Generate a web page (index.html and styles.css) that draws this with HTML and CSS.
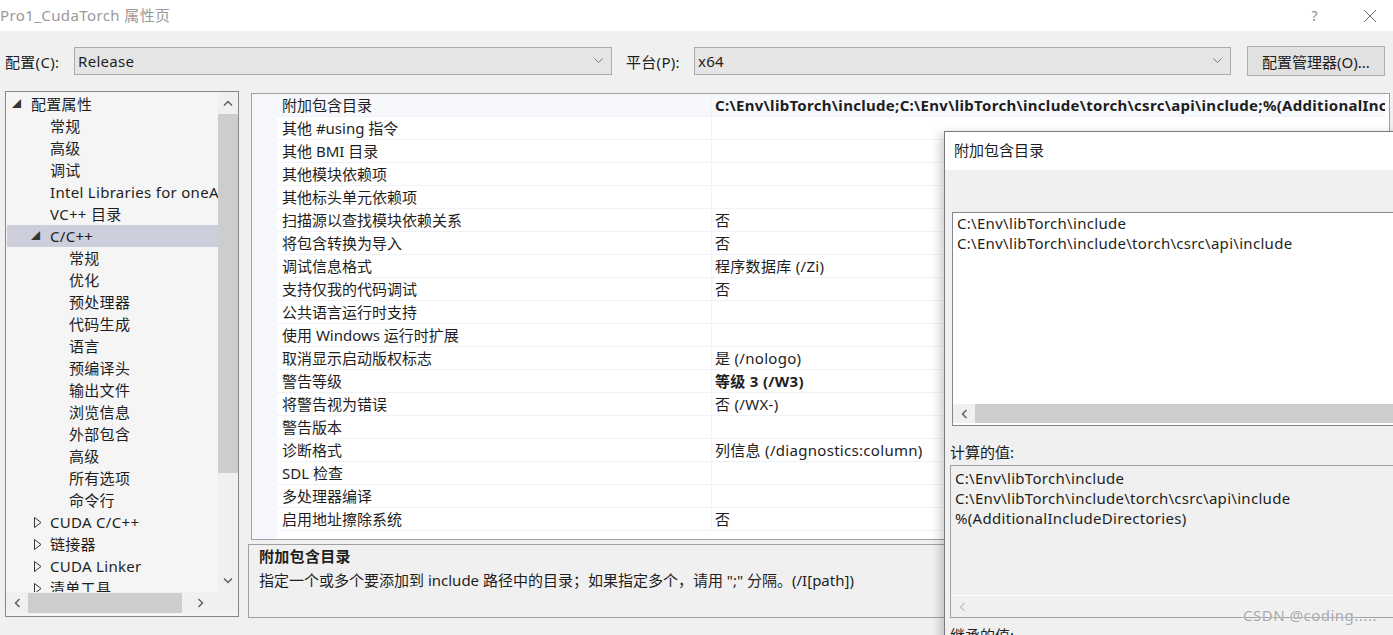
FILE: index.html
```html
<!DOCTYPE html>
<html lang="zh-CN">
<head>
<meta charset="utf-8">
<title>Pro1_CudaTorch 属性页</title>
<link rel="stylesheet" href="styles.css">
</head>
<body>
<div class="window">
  <div class="titlebar">
    <span class="title">Pro1_CudaTorch 属性页</span>
    <span class="help">?</span>
    <svg class="close" width="14" height="14" viewBox="0 0 14 14"><path d="M1 1L13 13M13 1L1 13" stroke="#6b6b6b" stroke-width="1" fill="none"/></svg>
  </div>

  <div class="configbar">
    <span class="lbl lbl-conf">配置(C):</span>
    <div class="select sel-conf"><span>Release</span><svg class="chev" width="9" height="6" viewBox="0 0 9 6"><path d="M0.5 0.5L4.5 4.5L8.5 0.5" stroke="#7a7a7a" fill="none"/></svg></div>
    <span class="lbl lbl-plat">平台(P):</span>
    <div class="select sel-plat"><span>x64</span><svg class="chev" width="9" height="6" viewBox="0 0 9 6"><path d="M0.5 0.5L4.5 4.5L8.5 0.5" stroke="#7a7a7a" fill="none"/></svg></div>
    <div class="button">配置管理器(O)...</div>
  </div>

  <div class="main">
    <div class="tree">
      <div class="tree-body">
        <div class="tree-items">
          <div class="ti l0"><span class="exp">◢</span>配置属性</div>
          <div class="ti l1">常规</div>
          <div class="ti l1">高级</div>
          <div class="ti l1">调试</div>
          <div class="ti l1">Intel Libraries for oneAPI</div>
          <div class="ti l1">VC++ 目录</div>
          <div class="ti l1 sel"><span class="exp">◢</span>C/C++</div>
          <div class="ti l2">常规</div>
          <div class="ti l2">优化</div>
          <div class="ti l2">预处理器</div>
          <div class="ti l2">代码生成</div>
          <div class="ti l2">语言</div>
          <div class="ti l2">预编译头</div>
          <div class="ti l2">输出文件</div>
          <div class="ti l2">浏览信息</div>
          <div class="ti l2">外部包含</div>
          <div class="ti l2">高级</div>
          <div class="ti l2">所有选项</div>
          <div class="ti l2">命令行</div>
          <div class="ti l1"><span class="col"><svg width="8" height="11" viewBox="0 0 8 11"><path d="M0.5 0.5L7 5.5L0.5 10.5Z" stroke="#333" fill="none"/></svg></span>CUDA C/C++</div>
          <div class="ti l1"><span class="col"><svg width="8" height="11" viewBox="0 0 8 11"><path d="M0.5 0.5L7 5.5L0.5 10.5Z" stroke="#333" fill="none"/></svg></span>链接器</div>
          <div class="ti l1"><span class="col"><svg width="8" height="11" viewBox="0 0 8 11"><path d="M0.5 0.5L7 5.5L0.5 10.5Z" stroke="#333" fill="none"/></svg></span>CUDA Linker</div>
          <div class="ti l1"><span class="col"><svg width="8" height="11" viewBox="0 0 8 11"><path d="M0.5 0.5L7 5.5L0.5 10.5Z" stroke="#333" fill="none"/></svg></span>清单工具</div>
        </div>
        <div class="vscroll">
          <svg class="arr" width="10" height="6" viewBox="0 0 10 6"><path d="M1 5.5L5 1.5L9 5.5" stroke="#606060" stroke-width="1.5" fill="none"/></svg>
          <div class="vthumb"></div>
          <div class="vspace"></div>
          <svg class="arr" width="10" height="6" viewBox="0 0 10 6"><path d="M1 0.5L5 4.5L9 0.5" stroke="#606060" stroke-width="1.5" fill="none"/></svg>
        </div>
      </div>
      <div class="hscroll">
        <svg class="harr" width="6" height="10" viewBox="0 0 6 10"><path d="M5.5 1L1.5 5L5.5 9" stroke="#606060" stroke-width="1.5" fill="none"/></svg>
        <div class="hthumb"></div>
        <div class="hspace"></div>
        <svg class="harr" width="6" height="10" viewBox="0 0 6 10"><path d="M0.5 1L4.5 5L0.5 9" stroke="#606060" stroke-width="1.5" fill="none"/></svg>
        <div class="corner"></div>
      </div>
    </div>

    <div class="rightcol">
      <div class="grid">
        <div class="row first"><div class="name">附加包含目录</div><div class="val bold">C:\Env\libTorch\include;C:\Env\libTorch\include\torch\csrc\api\include;%(AdditionalIncludeDirectories)</div></div>
        <div class="row"><div class="name">其他 #using 指令</div><div class="val"></div></div>
        <div class="row"><div class="name">其他 BMI 目录</div><div class="val"></div></div>
        <div class="row"><div class="name">其他模块依赖项</div><div class="val"></div></div>
        <div class="row"><div class="name">其他标头单元依赖项</div><div class="val"></div></div>
        <div class="row"><div class="name">扫描源以查找模块依赖关系</div><div class="val">否</div></div>
        <div class="row"><div class="name">将包含转换为导入</div><div class="val">否</div></div>
        <div class="row"><div class="name">调试信息格式</div><div class="val">程序数据库 (/Zi)</div></div>
        <div class="row"><div class="name">支持仅我的代码调试</div><div class="val">否</div></div>
        <div class="row"><div class="name">公共语言运行时支持</div><div class="val"></div></div>
        <div class="row"><div class="name">使用 Windows 运行时扩展</div><div class="val"></div></div>
        <div class="row"><div class="name">取消显示启动版权标志</div><div class="val">是 (/nologo)</div></div>
        <div class="row"><div class="name">警告等级</div><div class="val bold">等级 3 (/W3)</div></div>
        <div class="row"><div class="name">将警告视为错误</div><div class="val">否 (/WX-)</div></div>
        <div class="row"><div class="name">警告版本</div><div class="val"></div></div>
        <div class="row"><div class="name">诊断格式</div><div class="val">列信息 (/diagnostics:column)</div></div>
        <div class="row"><div class="name">SDL 检查</div><div class="val"></div></div>
        <div class="row"><div class="name">多处理器编译</div><div class="val"></div></div>
        <div class="row"><div class="name">启用地址擦除系统</div><div class="val">否</div></div>
      </div>
      <div class="desc">
        <div class="desc-title">附加包含目录</div>
        <div class="desc-text">指定一个或多个要添加到 include 路径中的目录；如果指定多个，请用 ";" 分隔。(/I[path])</div>
      </div>
    </div>
  </div>

  <div class="popup">
    <div class="pop-title">附加包含目录</div>
    <div class="pop-body">
      <div class="toolbar-space"></div>
      <div class="editbox">
        <div class="lines">
          <div>C:\Env\libTorch\include</div>
          <div>C:\Env\libTorch\include\torch\csrc\api\include</div>
        </div>
        <div class="pop-hscroll">
          <svg class="harr" width="6" height="10" viewBox="0 0 6 10"><path d="M5.5 1L1.5 5L5.5 9" stroke="#606060" stroke-width="1.5" fill="none"/></svg>
          <div class="pthumb"></div>
        </div>
      </div>
      <div class="pop-label">计算的值:</div>
      <div class="computed">
        <div class="lines">
          <div>C:\Env\libTorch\include</div>
          <div>C:\Env\libTorch\include\torch\csrc\api\include</div>
          <div>%(AdditionalIncludeDirectories)</div>
        </div>
        <div class="comp-hscroll">
          <svg class="harr" width="6" height="10" viewBox="0 0 6 10"><path d="M5.5 1L1.5 5L5.5 9" stroke="#c8c8c8" stroke-width="1.5" fill="none"/></svg>
        </div>
      </div>
      <div class="pop-label inh">继承的值:</div>
    </div>
  </div>

  <div class="watermark">CSDN @coding.....</div>
</div>
</body>
</html>
```

FILE: styles.css
```css
* { box-sizing: border-box; }

html, body {
  margin: 0;
  padding: 0;
}

body {
  width: 1393px;
  height: 635px;
  overflow: hidden;
  background: #f0f0f0;
  font-family: "Noto Sans", "Noto Sans CJK SC", sans-serif;
  font-size: 15px;
  letter-spacing: 0.3px;
  color: #1e1e1e;
}

.window {
  position: relative;
  width: 1393px;
  height: 635px;
}

/* title bar */
.titlebar {
  height: 31px;
  background: #ffffff;
  display: flex;
  align-items: center;
}
.title {
  color: #9a9a9a;
  font-size: 15px;
  letter-spacing: 0.4px;
  flex: 1;
  margin-top: -2px;
}
.help {
  color: #8a8a8a;
  font-size: 14px;
  margin-right: 45px;
}
.close {
  margin-right: 16px;
}

/* config bar */
.configbar {
  height: 60px;
  display: flex;
  align-items: center;
  padding-left: 5px;
}
.lbl { color: #1e1e1e; }
.lbl-conf { width: 69px; }
.lbl-plat { width: 68px; margin-left: 14px; }
.select {
  height: 28px;
  background: #e5e5e5;
  border: 1px solid #acacac;
  display: flex;
  align-items: center;
  justify-content: space-between;
  padding: 0 8px 0 3px;
}
.sel-conf { width: 538px; }
.sel-plat { width: 537px; }
.button {
  margin-left: 16px;
  width: 138px;
  height: 30px;
  background: #e1e1e1;
  border: 1px solid #adadad;
  display: flex;
  align-items: center;
  justify-content: center;
  letter-spacing: 0;
}

/* main */
.main {
  display: flex;
  align-items: flex-start;
}

.tree {
  margin-left: 5px;
  width: 234px;
  height: 526px;
  border: 1px solid #828790;
  background: #f5f5f5;
  display: flex;
  flex-direction: column;
}
.tree-body {
  flex: 1;
  display: flex;
  min-height: 0;
}
.tree-items {
  flex: 1;
  overflow: hidden;
  padding-top: 1px;
  padding-left: 1px;
}
.ti {
  height: 22px;
  line-height: 22px;
  white-space: nowrap;
  overflow: hidden;
}
.ti.l0 { padding-left: 24px; }
.ti.l1 { padding-left: 43px; }
.ti.l2 { padding-left: 62px; }
.ti.sel { background: #cccedb; }
.exp {
  display: inline-block;
  width: 0;
  margin-left: -19px;
  margin-right: 19px;
  font-size: 9px;
  color: #333;
  vertical-align: top;
}
.col {
  display: inline-block;
  width: 0;
  margin-left: -16px;
  margin-right: 16px;
  vertical-align: top;
}
.col svg { margin-top: 6px; }

.vscroll {
  width: 20px;
  background: #f0f0f0;
  display: flex;
  flex-direction: column;
  align-items: center;
}
.vscroll .arr { margin: 8px 0; }
.vthumb {
  width: 20px;
  height: 359px;
  background: #cdcdcd;
}
.vspace { flex: 1; }

.hscroll {
  height: 21px;
  margin-bottom: 3px;
  display: flex;
  align-items: center;
  background: #f0f0f0;
}
.hscroll .harr { margin: 0 8px; }
.hthumb {
  width: 154px;
  height: 20px;
  background: #cdcdcd;
}
.hspace { flex: 1; }
.corner {
  width: 20px;
  height: 21px;
  background: #f0f0f0;
  margin-left: 6px;
}

.rightcol {
  margin-left: 9px;
  width: 1142px;
  display: flex;
  flex-direction: column;
  margin-top: 2px;
}

.grid {
  margin-left: 3px;
  height: 447px;
  border: 1px solid #a0a0a0;
  background: #ffffff;
  padding-left: 25px;
  padding-right: 4px;
  box-shadow: inset 25px 0 0 #f5f7fc;
}
.row {
  height: 23px;
  display: flex;
  border-bottom: 1px solid #f0f2f8;
  background: #ffffff;
}
.row.first { background: #f6f8fc; }
.name {
  width: 434px;
  padding-left: 5px;
  line-height: 22px;
  white-space: nowrap;
  letter-spacing: 0;
}
.val {
  flex: 1;
  border-left: 1px solid #f0f2f8;
  padding-left: 3px;
  line-height: 22px;
  white-space: nowrap;
  overflow: hidden;
}
.bold { font-weight: bold; }

.desc {
  margin-top: 4px;
  height: 74px;
  border: 1px solid #a0a0a0;
  background: #f0f0f0;
  padding: 0 10px;
}
.desc-title {
  font-weight: bold;
  line-height: 23px;
}
.desc-text {
  line-height: 24px;
  letter-spacing: 0;
}

/* popup dialog */
.popup {
  position: absolute;
  left: 944px;
  top: 131px;
  width: 470px;
  height: 520px;
  border: 1px solid #7a7a7a;
  background: #f0f0f0;
  box-shadow: -3px 3px 10px rgba(0, 0, 0, 0.22);
}
.pop-title {
  height: 38px;
  background: #ffffff;
  padding-left: 9px;
  line-height: 37px;
  font-size: 15px;
  letter-spacing: 0;
}
.pop-body {
  padding-left: 7px;
}
.toolbar-space { height: 42px; }
.editbox {
  height: 214px;
  border: 1px solid #828790;
  background: #ffffff;
  display: flex;
  flex-direction: column;
}
.lines {
  flex: 1;
  padding: 0 0 0 4px;
  line-height: 20px;
  white-space: nowrap;
}
.pop-hscroll {
  height: 19px;
  margin-bottom: 2px;
  display: flex;
  align-items: center;
  background: #f0f0f0;
}
.pop-hscroll .harr { margin: 0 8px; }
.pthumb {
  flex: 1;
  height: 19px;
  background: #cdcdcd;
}
.pop-label {
  margin-left: -2px;
  height: 39px;
  line-height: 52px;
  letter-spacing: 0;
}
.computed {
  margin-left: -2px;
  height: 153px;
  border: 1px solid #a0a0a0;
  background: #f0f0f0;
  display: flex;
  flex-direction: column;
}
.computed .lines { padding-top: 2px; }
.comp-hscroll {
  height: 22px;
  border-top: 1px solid #ffffff;
  display: flex;
  align-items: center;
  padding-left: 8px;
}
.pop-label.inh { line-height: 34px; }

.watermark {
  position: absolute;
  left: 1243px;
  top: 605px;
  color: #a8a8a8;
  font-size: 15px;
  letter-spacing: 0.5px;
  text-shadow: 0 0 2px #ffffff;
}
```
